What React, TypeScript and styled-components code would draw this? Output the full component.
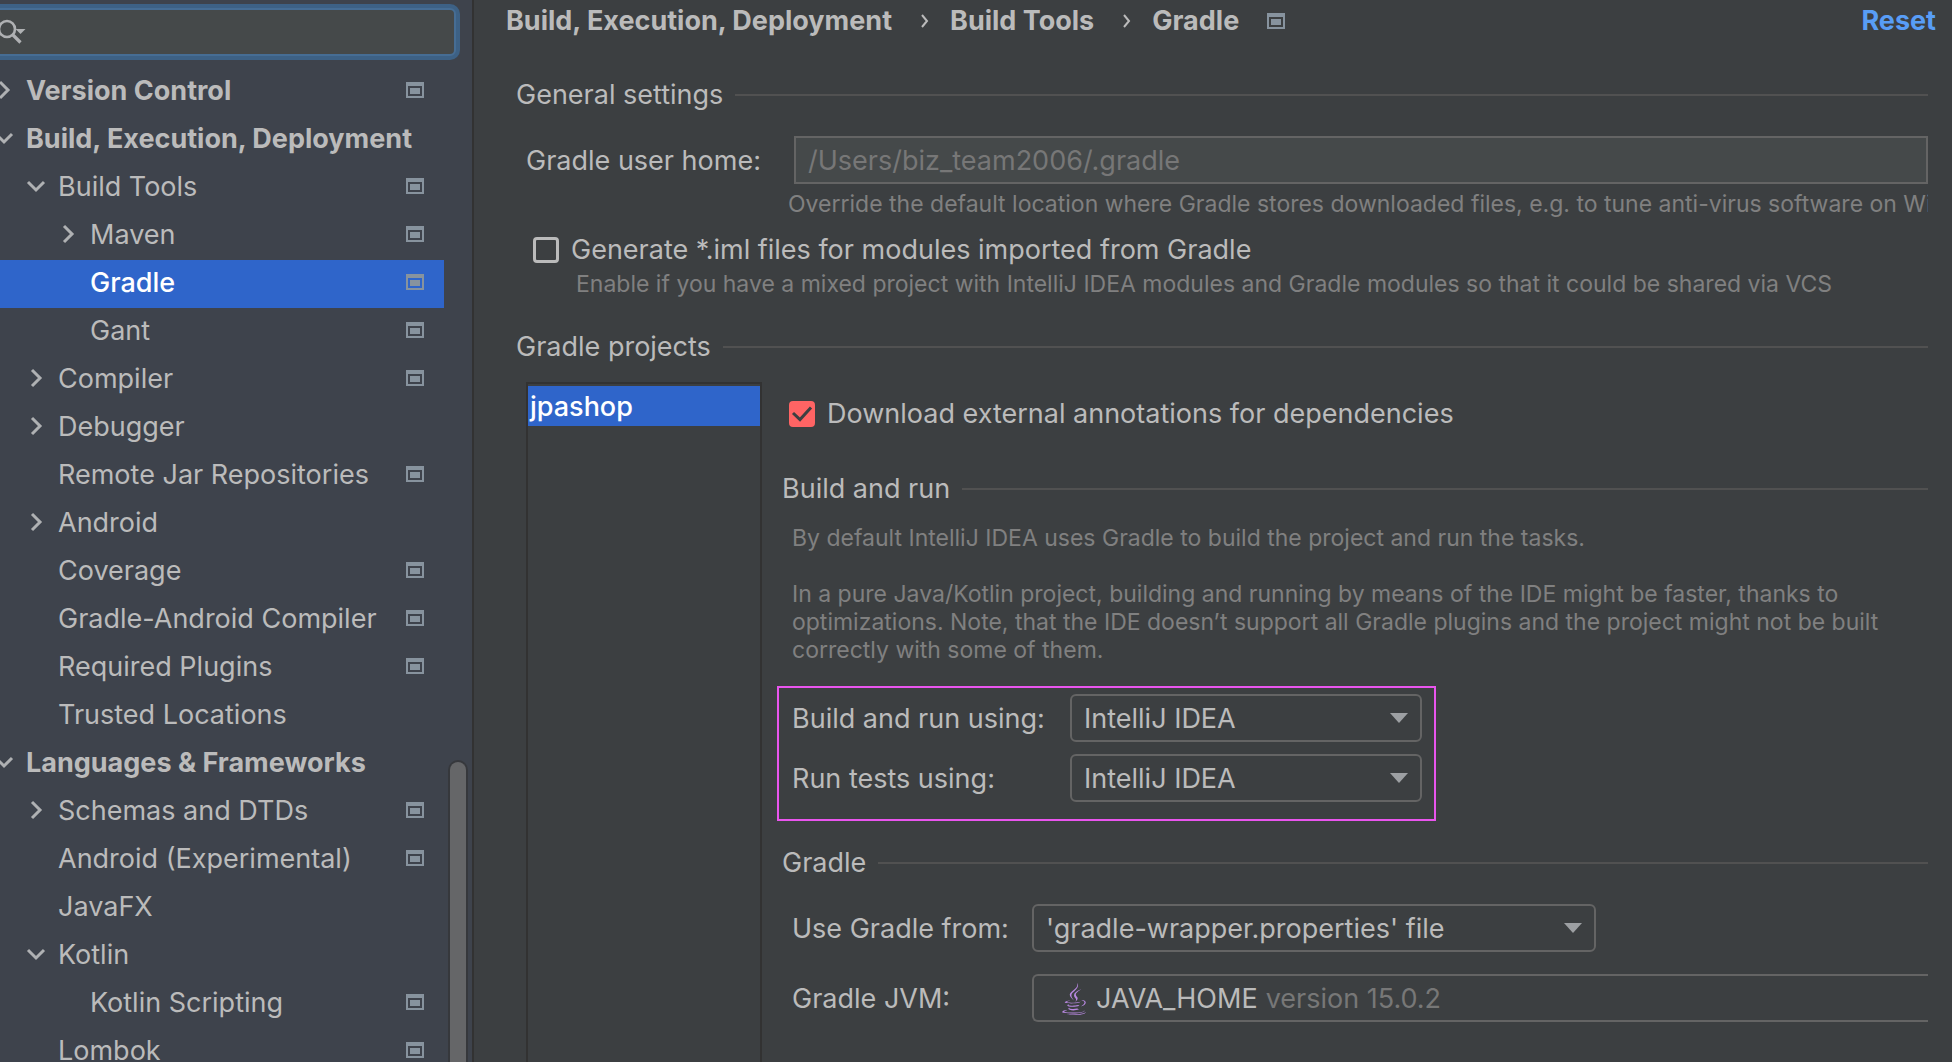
import React from "react";
import styled, { createGlobalStyle, css } from "styled-components";
import { FaJava } from "react-icons/fa";

const color = {
  panel: "#3c3f41",
  sidebar: "#3e434c",
  field: "#45494a",
  edge: "#323232",
  border: "#646464",
  rule: "#515151",
  text: "#bbbbbb",
  hint: "#808080",
  muted: "#777777",
  selection: "#2f65ca",
  glyph: "#87939e",
  link: "#589df6",
  accent: "#ff6464",
  mark: "#e955ee",
};

const GlobalStyle = createGlobalStyle`
  *, *::before, *::after { box-sizing: border-box; }
  body {
    margin: 0;
    overflow: hidden;
    background: ${color.panel};
    color: ${color.text};
    font-family: Inter, "Liberation Sans", sans-serif;
    font-size: 27px;
    line-height: 32px;
  }
  input, select, button { font: inherit; color: inherit; }
`;

const Window = styled.div`
  display: flex;
  height: 100vh;
  overflow: hidden;
`;

/* ---------- sidebar ---------- */

const Sidebar = styled.aside`
  flex: 0 0 482px;
  display: flex;
  flex-direction: column;
  margin-left: -8px;
  padding-top: 8px;
  background: ${color.sidebar};
  border-right: 2px solid ${color.edge};
`;

const SearchBox = styled.label`
  display: flex;
  align-items: center;
  height: 48px;
  margin: 0 16px 12px 0;
  padding-left: 4px;
  flex: none;
  background: ${color.field};
  border: 2px solid #466d94;
  border-radius: 6px;
  box-shadow: 0 0 0 4px #3d6185;
`;

const SearchInput = styled.input`
  flex: 1;
  min-width: 0;
  border: 0;
  outline: 0;
  background: none;
`;

const SidebarBody = styled.div`
  flex: 1;
  min-height: 0;
  display: flex;
  gap: 4px;
  padding-right: 4px;
`;

const Tree = styled.ul`
  flex: 1;
  min-width: 0;
  margin: 0;
  padding: 0;
  list-style: none;
  overflow: hidden;
`;

const TreeRow = styled.li<{ $level: number; $bold?: boolean; $selected?: boolean }>`
  display: flex;
  align-items: center;
  gap: 10px;
  height: 48px;
  padding: 0 20px 2px ${(p) => p.$level * 32}px;
  font-weight: ${(p) => (p.$bold ? 700 : 400)};
  white-space: nowrap;
  ${(p) =>
    p.$selected &&
    css`
      background: ${color.selection};
      color: #ffffff;
      font-weight: 500;
    `}
`;

const TreeLabel = styled.span`
  flex: 1;
`;

const TreeGlyph = styled.span<{ $width: number }>`
  display: flex;
  flex: 0 0 ${(p) => p.$width}px;
  padding-bottom: 2px;
`;

const ScrollTrack = styled.div`
  flex: 0 0 20px;
  display: grid;
  grid-template-rows: 692fr 302fr;
`;

const ScrollThumb = styled.div`
  grid-row: 2;
  background: #656668;
  border: 2px solid #36383c;
  border-bottom: 0;
  border-radius: 10px 10px 0 0;
`;

/* ---------- main pane ---------- */

const Main = styled.main`
  flex: 1;
  min-width: 0;
  display: flex;
  flex-direction: column;
`;

const Header = styled.header`
  display: flex;
  align-items: center;
  justify-content: space-between;
  height: 42px;
  flex: none;
  padding: 0 16px 0 32px;
  font-weight: 700;
`;

const Breadcrumb = styled.nav`
  display: flex;
  align-items: center;
  white-space: nowrap;
`;

const CrumbArrow = styled.svg`
  margin: 0 20px 0 28px;
`;

const CrumbGlyph = styled.span`
  display: flex;
  margin-left: 28px;
`;

const ResetLink = styled.a`
  color: ${color.link};
  text-decoration: none;
`;

const Body = styled.div`
  flex: 1;
  min-height: 0;
  display: flex;
  flex-direction: column;
  padding: 37px 24px 0 42px;
`;

const SectionTitle = styled.h2<{ $top?: number }>`
  display: flex;
  align-items: center;
  gap: 12px;
  margin: ${(p) => p.$top ?? 0}px 0 0;
  flex: none;
  font-size: 27px;
  line-height: 32px;
  font-weight: 400;
  white-space: nowrap;

  &::after {
    content: "";
    flex: 1;
    height: 2px;
    background: ${color.rule};
  }
`;

const FormRow = styled.div<{ $label: number; $indent?: number; $top?: number }>`
  display: grid;
  grid-template-columns: ${(p) => p.$label}px minmax(0, 1fr);
  align-items: center;
  margin-top: ${(p) => p.$top ?? 0}px;
  padding-left: ${(p) => p.$indent ?? 0}px;
  white-space: nowrap;

  > label { padding-top: 2px; }
`;

const PathInput = styled.input`
  width: 100%;
  height: 48px;
  padding: 0 12px;
  background: ${color.field};
  border: 2px solid ${color.border};
  border-radius: 0;

  &:disabled { color: ${color.muted}; }
`;

const Hint = styled.p<{ $indent: number; $top: number; $wrap?: boolean }>`
  margin: ${(p) => p.$top}px 0 0 ${(p) => p.$indent}px;
  flex: none;
  color: ${color.hint};
  font-size: 23px;
  line-height: 28px;
  white-space: ${(p) => (p.$wrap ? "normal" : "nowrap")};
  overflow: hidden;
`;

const CheckLabel = styled.label<{ $indent: number; $top: number }>`
  display: flex;
  align-items: center;
  gap: 12px;
  margin: ${(p) => p.$top}px 0 0 ${(p) => p.$indent}px;
`;

const CheckStack = styled.span`
  display: grid;

  > * { grid-area: 1 / 1; }
  > svg { pointer-events: none; visibility: hidden; }
  > input:checked + svg { visibility: visible; }
`;

const CheckInput = styled.input`
  appearance: none;
  width: 26px;
  height: 26px;
  margin: 0;
  border: 3px solid ${color.text};
  border-radius: 4px;

  &:checked {
    background: ${color.accent};
    border-color: ${color.accent};
  }
`;

const Projects = styled.div`
  flex: 1;
  min-height: 0;
  display: flex;
  gap: 20px;
  margin-top: 19px;
  padding-left: 10px;
`;

const ProjectList = styled.ul`
  flex: 0 0 236px;
  margin: 0;
  padding: 2px 0 0;
  list-style: none;
  border: 2px solid ${color.edge};
  border-bottom: 0;
`;

const ProjectItem = styled.li`
  height: 40px;
  padding-left: 2px;
  line-height: 42px;
  background: ${color.selection};
  color: #ffffff;
  font-weight: 500;
`;

const ProjectSettings = styled.div`
  flex: 1;
  min-width: 0;
`;

const Highlight = styled.div`
  display: grid;
  gap: 12px;
  width: fit-content;
  margin: 22px 0 26px -5px;
  padding: 6px 12px 17px 13px;
  border: 2px solid ${color.mark};
`;

const SelectStack = styled.span<{ $width: number }>`
  display: grid;
  align-items: center;
  width: ${(p) => p.$width}px;
  max-width: 100%;

  > * { grid-area: 1 / 1; }
  > svg { justify-self: end; margin-right: 14px; pointer-events: none; }
`;

const SelectBox = styled.select`
  appearance: none;
  width: 100%;
  height: 48px;
  padding: 2px 40px 0 12px;
  background: ${color.panel};
  border: 2px solid ${color.border};
  border-radius: 6px;
`;

const JvmBox = styled.div`
  display: flex;
  align-items: center;
  height: 48px;
  padding: 2px 0 0 28px;
  border: 2px solid ${color.border};
  border-right: 0;
  border-radius: 6px 0 0 6px;
`;

const JavaIcon = styled(FaJava)`
  width: 24px;
  height: 32px;
  margin-right: 10px;
  color: #b888e0;
`;

const JvmSelect = styled.select`
  appearance: none;
  field-sizing: content;
  padding: 0;
  border: 0;
  background: none;
`;

const JvmVersion = styled.span`
  margin-left: 8px;
  color: ${color.muted};
`;

/* ---------- drawings ---------- */

const ProjectGlyph = () => (
  <svg width="18" height="16" viewBox="0 0 18 16" fill={color.glyph} aria-hidden="true">
    <path fillRule="evenodd" d="M0 0H18V16H0ZM2 4V14H16V4Z" />
    <rect x="4" y="6" width="10" height="6" />
  </svg>
);

const TreeChevron = ({ open }: { open: boolean }) => (
  <svg width="24" height="20" viewBox="0 0 24 20" fill="none" stroke="#afb1b3" strokeWidth="3" aria-hidden="true">
    <path d={open ? "M4 6L12 14L20 6" : "M8 2L16 10L8 18"} />
  </svg>
);

const CrumbChevron = () => (
  <CrumbArrow width="10" height="16" viewBox="0 0 10 16" fill="none" stroke={color.text} strokeWidth="2" aria-hidden="true">
    <path d="M2 2L7 8L2 14" />
  </CrumbArrow>
);

const SearchGlyph = () => (
  <svg width="32" height="32" viewBox="0 0 32 32" fill="none" stroke="#afb1b3" aria-hidden="true">
    <circle cx="9" cy="13" r="8" strokeWidth="2.6" />
    <path d="M15 19L22.500 26.500" strokeWidth="3.2" />
    <path d="M17.500 13H27.500L22.500 18Z" fill="#afb1b3" stroke="none" />
  </svg>
);

const SelectArrow = () => (
  <svg width="18" height="10" viewBox="0 0 18 10" fill="#9da0a3" aria-hidden="true">
    <path d="M0 0H18L9 10Z" />
  </svg>
);

const CheckMark = () => (
  <svg width="26" height="26" viewBox="0 0 26 26" fill="none" stroke={color.panel} strokeWidth="3" aria-hidden="true">
    <path d="M4 12L11 18.500L22 6.500" />
  </svg>
);

/* ---------- data ---------- */

type Node = {
  label: string;
  level: number;
  state?: "open" | "closed";
  project?: boolean;
  bold?: boolean;
  selected?: boolean;
};

const nodes: Node[] = [
  { label: "Version Control", level: 0, state: "closed", project: true, bold: true },
  { label: "Build, Execution, Deployment", level: 0, state: "open", bold: true },
  { label: "Build Tools", level: 1, state: "open", project: true },
  { label: "Maven", level: 2, state: "closed", project: true },
  { label: "Gradle", level: 2, project: true, selected: true },
  { label: "Gant", level: 2, project: true },
  { label: "Compiler", level: 1, state: "closed", project: true },
  { label: "Debugger", level: 1, state: "closed" },
  { label: "Remote Jar Repositories", level: 1, project: true },
  { label: "Android", level: 1, state: "closed" },
  { label: "Coverage", level: 1, project: true },
  { label: "Gradle-Android Compiler", level: 1, project: true },
  { label: "Required Plugins", level: 1, project: true },
  { label: "Trusted Locations", level: 1 },
  { label: "Languages & Frameworks", level: 0, state: "open", bold: true },
  { label: "Schemas and DTDs", level: 1, state: "closed", project: true },
  { label: "Android (Experimental)", level: 1, project: true },
  { label: "JavaFX", level: 1 },
  { label: "Kotlin", level: 1, state: "open" },
  { label: "Kotlin Scripting", level: 2, project: true },
  { label: "Lombok", level: 1, project: true },
];

/* ---------- composed controls ---------- */

const CheckField = (props: { label: string; checked?: boolean; indent: number; top: number }) => (
  <CheckLabel $indent={props.indent} $top={props.top}>
    <CheckStack>
      <CheckInput type="checkbox" defaultChecked={props.checked} />
      <CheckMark />
    </CheckStack>
    {props.label}
  </CheckLabel>
);

const SelectField = (props: { id: string; width: number; options: string[] }) => (
  <SelectStack $width={props.width}>
    <SelectBox id={props.id}>
      {props.options.map((o) => (
        <option key={o}>{o}</option>
      ))}
    </SelectBox>
    <SelectArrow />
  </SelectStack>
);

export default function App() {
  return (
    <Window>
      <GlobalStyle />
      <Sidebar>
        <SearchBox>
          <SearchGlyph />
          <SearchInput type="text" aria-label="Search settings" />
        </SearchBox>
        <SidebarBody>
          <Tree>
            {nodes.map((n) => (
              <TreeRow key={n.label} $level={n.level} $bold={n.bold} $selected={n.selected}>
                <TreeGlyph $width={24}>{n.state && <TreeChevron open={n.state === "open"} />}</TreeGlyph>
                <TreeLabel>{n.label}</TreeLabel>
                {n.project && (
                  <TreeGlyph $width={18}>
                    <ProjectGlyph />
                  </TreeGlyph>
                )}
              </TreeRow>
            ))}
          </Tree>
          <ScrollTrack>
            <ScrollThumb />
          </ScrollTrack>
        </SidebarBody>
      </Sidebar>

      <Main>
        <Header>
          <Breadcrumb aria-label="Settings path">
            <span>Build, Execution, Deployment</span>
            <CrumbChevron />
            <span>Build Tools</span>
            <CrumbChevron />
            <span>Gradle</span>
            <CrumbGlyph>
              <ProjectGlyph />
            </CrumbGlyph>
          </Breadcrumb>
          <ResetLink href="#reset">Reset</ResetLink>
        </Header>

        <Body>
          <SectionTitle>General settings</SectionTitle>
          <FormRow $label={268} $indent={10} $top={25}>
            <label htmlFor="home">Gradle user home:</label>
            <PathInput id="home" type="text" defaultValue="/Users/biz_team2006/.gradle" disabled />
          </FormRow>
          <Hint $indent={272} $top={6}>
            Override the default location where Gradle stores downloaded files, e.g. to tune anti-virus software on Windows
          </Hint>
          <CheckField label="Generate *.iml files for modules imported from Gradle" indent={17} top={16} />
          <Hint $indent={60} $top={4}>
            Enable if you have a mixed project with IntelliJ IDEA modules and Gradle modules so that it could be shared via VCS
          </Hint>

          <SectionTitle $top={33}>Gradle projects</SectionTitle>
          <Projects>
            <ProjectList>
              <ProjectItem>jpashop</ProjectItem>
            </ProjectList>
            <ProjectSettings>
              <CheckField label="Download external annotations for dependencies" checked indent={7} top={16} />
              <SectionTitle $top={43}>Build and run</SectionTitle>
              <Hint $indent={10} $top={19}>
                By default IntelliJ IDEA uses Gradle to build the project and run the tasks.
              </Hint>
              <Hint $indent={10} $top={28} $wrap>
                In a pure Java/Kotlin project, building and running by means of the IDE might be faster, thanks to
                optimizations. Note, that the IDE doesn’t support all Gradle plugins and the project might not be built
                correctly with some of them.
              </Hint>
              <Highlight>
                <FormRow $label={278}>
                  <label htmlFor="build">Build and run using:</label>
                  <SelectField id="build" width={352} options={["IntelliJ IDEA", "Gradle"]} />
                </FormRow>
                <FormRow $label={278}>
                  <label htmlFor="tests">Run tests using:</label>
                  <SelectField id="tests" width={352} options={["IntelliJ IDEA", "Gradle"]} />
                </FormRow>
              </Highlight>
              <SectionTitle>Gradle</SectionTitle>
              <FormRow $label={240} $indent={10} $top={25}>
                <label htmlFor="source">Use Gradle from:</label>
                <SelectField id="source" width={564} options={["'gradle-wrapper.properties' file", "Specified location"]} />
              </FormRow>
              <FormRow $label={240} $indent={10} $top={22}>
                <label htmlFor="jvm">Gradle JVM:</label>
                <JvmBox>
                  <JavaIcon />
                  <JvmSelect id="jvm">
                    <option>JAVA_HOME</option>
                  </JvmSelect>
                  <JvmVersion>version 15.0.2</JvmVersion>
                </JvmBox>
              </FormRow>
            </ProjectSettings>
          </Projects>
        </Body>
      </Main>
    </Window>
  );
}
